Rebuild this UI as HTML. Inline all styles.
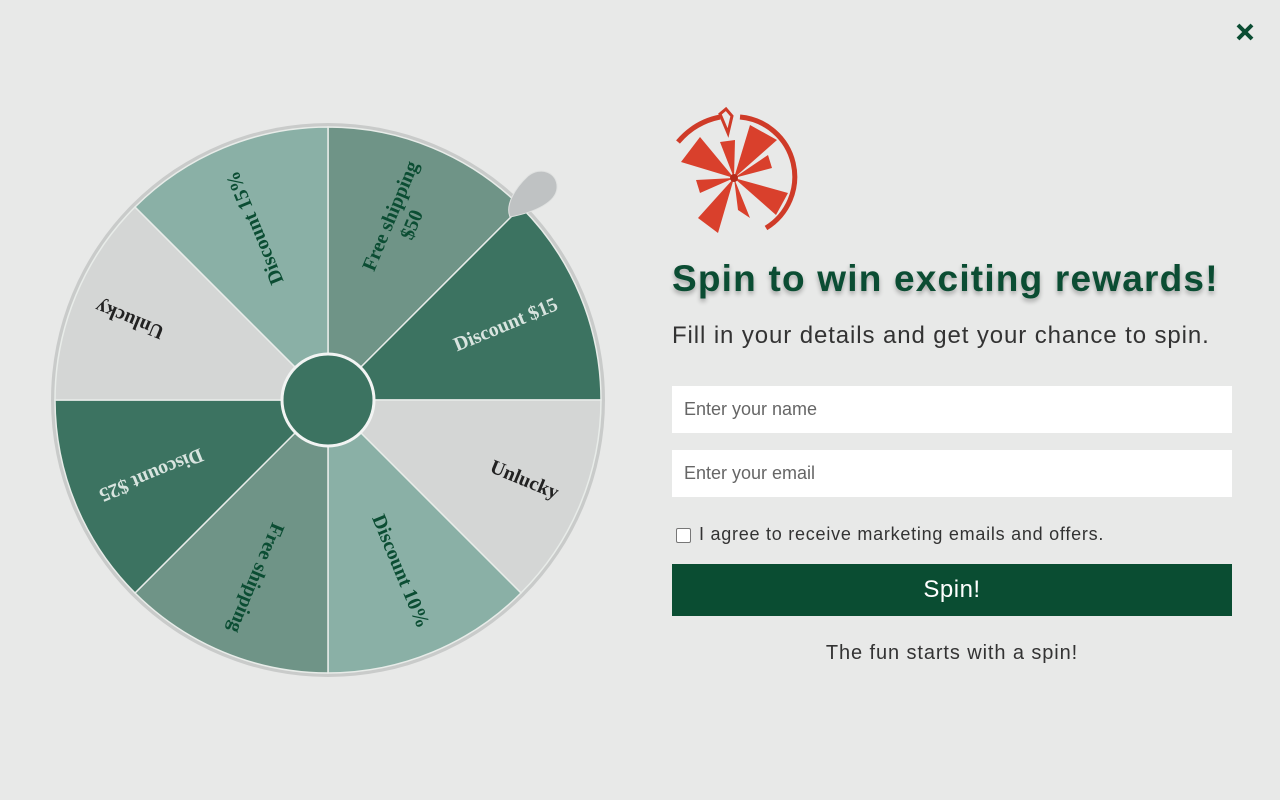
<!DOCTYPE html>
<html><head><style>
body{margin:0;width:1280px;height:800px;background:#e8e9e8;font-family:"Liberation Sans",sans-serif;position:relative;overflow:hidden}
.abs{position:absolute}
h1{position:absolute;left:672px;top:258px;margin:0;font-size:37px;font-weight:bold;color:#0b4d33;letter-spacing:1.2px;text-shadow:0 3px 5px rgba(0,0,0,.3);white-space:nowrap}
.sub{left:672px;top:322px;font-size:24px;letter-spacing:0.9px;color:#333;white-space:nowrap}
.inp{left:672px;height:47px;background:#fff;padding-left:12px;line-height:47px;font-size:18px;color:#666;width:548px}
.chk{left:676px;top:528px;width:13px;height:13px;border:1px solid #777;border-radius:2px;background:#fff}
.ct{left:699px;top:524px;font-size:18px;letter-spacing:0.75px;color:#333;white-space:nowrap}
.btn{left:672px;top:564px;width:560px;height:52px;background:#0a4d32;color:#fff;font-size:24px;letter-spacing:0.5px;text-align:center;line-height:52px}
.foot{left:672px;width:560px;top:642px;text-align:center;font-size:20px;letter-spacing:0.9px;color:#333}
</style></head><body>
<svg class="abs" style="left:0;top:0" width="640" height="800">
<g transform="translate(328,400)">
<circle r="277" fill="#c9cbca"/>
<g stroke="#e8ece9" stroke-width="1.5">
<path d="M0 0L0 -273A273 273 0 0 1 193 -193Z" fill="#6f9487"/>
<path d="M0 0L193 -193A273 273 0 0 1 273 0Z" fill="#3c7361"/>
<path d="M0 0L273 0A273 273 0 0 1 193 193Z" fill="#d4d6d5"/>
<path d="M0 0L193 193A273 273 0 0 1 0 273Z" fill="#8ab0a6"/>
<path d="M0 0L0 273A273 273 0 0 1 -193 193Z" fill="#6f9487"/>
<path d="M0 0L-193 193A273 273 0 0 1 -273 0Z" fill="#3c7361"/>
<path d="M0 0L-273 0A273 273 0 0 1 -193 -193Z" fill="#d4d6d5"/>
<path d="M0 0L-193 -193A273 273 0 0 1 0 -273Z" fill="#8ab0a6"/>
</g>
<g font-family="Liberation Serif,serif" font-weight="bold" font-size="20" text-anchor="middle" dominant-baseline="middle">
<g transform="rotate(-67.5)"><text x="194" y="-11" fill="#0b4d33">Free shipping</text><text x="194" y="12" fill="#0b4d33">$50</text></g>
<text transform="rotate(-22.5) translate(193 0)" fill="#d8e4df">Discount $15</text>
<text transform="rotate(22.5) translate(212 0)" fill="#222">Unlucky</text>
<text transform="rotate(67.5) translate(186 0)" fill="#0b4d33">Discount 10%</text>
<text transform="rotate(112.5) translate(192 0)" fill="#0b4d33">Free shipping</text>
<text transform="rotate(157.5) translate(192 0)" fill="#d8e4df">Discount $25</text>
<text transform="rotate(202.5) translate(214 0)" fill="#222">Unlucky</text>
<text transform="rotate(247.5) translate(187 0)" fill="#0b4d33">Discount 15%</text>
</g>
<circle r="46" fill="#3c7361" stroke="#f2f4f3" stroke-width="3"/>
</g>
<path d="M510 217 C505 205 515 188 528 176 C540 166 558 172 557 188 C556 202 536 212 510 217Z" fill="#bfc2c3" stroke="#e0e2e1" stroke-width="1"/>
</svg>
<svg class="abs" style="left:660px;top:100px" width="150" height="145">
<g fill="#d9402c">
<path d="M80 17 A60 60 0 0 1 106 128" fill="none" stroke="#cf3b28" stroke-width="5"/>
<path d="M60 14 L66 9 L72 16 L68 33 Z" fill="none" stroke="#cf3b28" stroke-width="3"/>
<path d="M60 17 Q35 22 18 42" fill="none" stroke="#cf3b28" stroke-width="5"/>
<path d="M74 78 L40 37 L21 62Z"/>
<path d="M74 78 L60 42 L75 40Z"/>
<path d="M74 78 L90 25 L117 40Z"/>
<path d="M74 78 L112 68 L108 55Z"/>
<path d="M74 78 L128 93 L116 115Z"/>
<path d="M74 78 L78 110 L90 118Z"/>
<path d="M74 78 L58 133 L38 118Z"/>
<path d="M74 78 L36 80 L40 93Z"/>
<circle cx="74" cy="78" r="4" fill="#b52b1c"/>
</g>
</svg>
<svg class="abs" style="left:1236px;top:23px" width="18" height="18"><path d="M2 2L16 16M16 2L2 16" stroke="#0b4d33" stroke-width="4"/></svg>
<h1>Spin to win exciting rewards!</h1>
<div class="abs sub">Fill in your details and get your chance to spin.</div>
<div class="abs inp" style="top:386px">Enter your name</div>
<div class="abs inp" style="top:450px">Enter your email</div>
<div class="abs chk"></div>
<div class="abs ct">I agree to receive marketing emails and offers.</div>
<div class="abs btn">Spin!</div>
<div class="abs foot">The fun starts with a spin!</div>
</body></html>
